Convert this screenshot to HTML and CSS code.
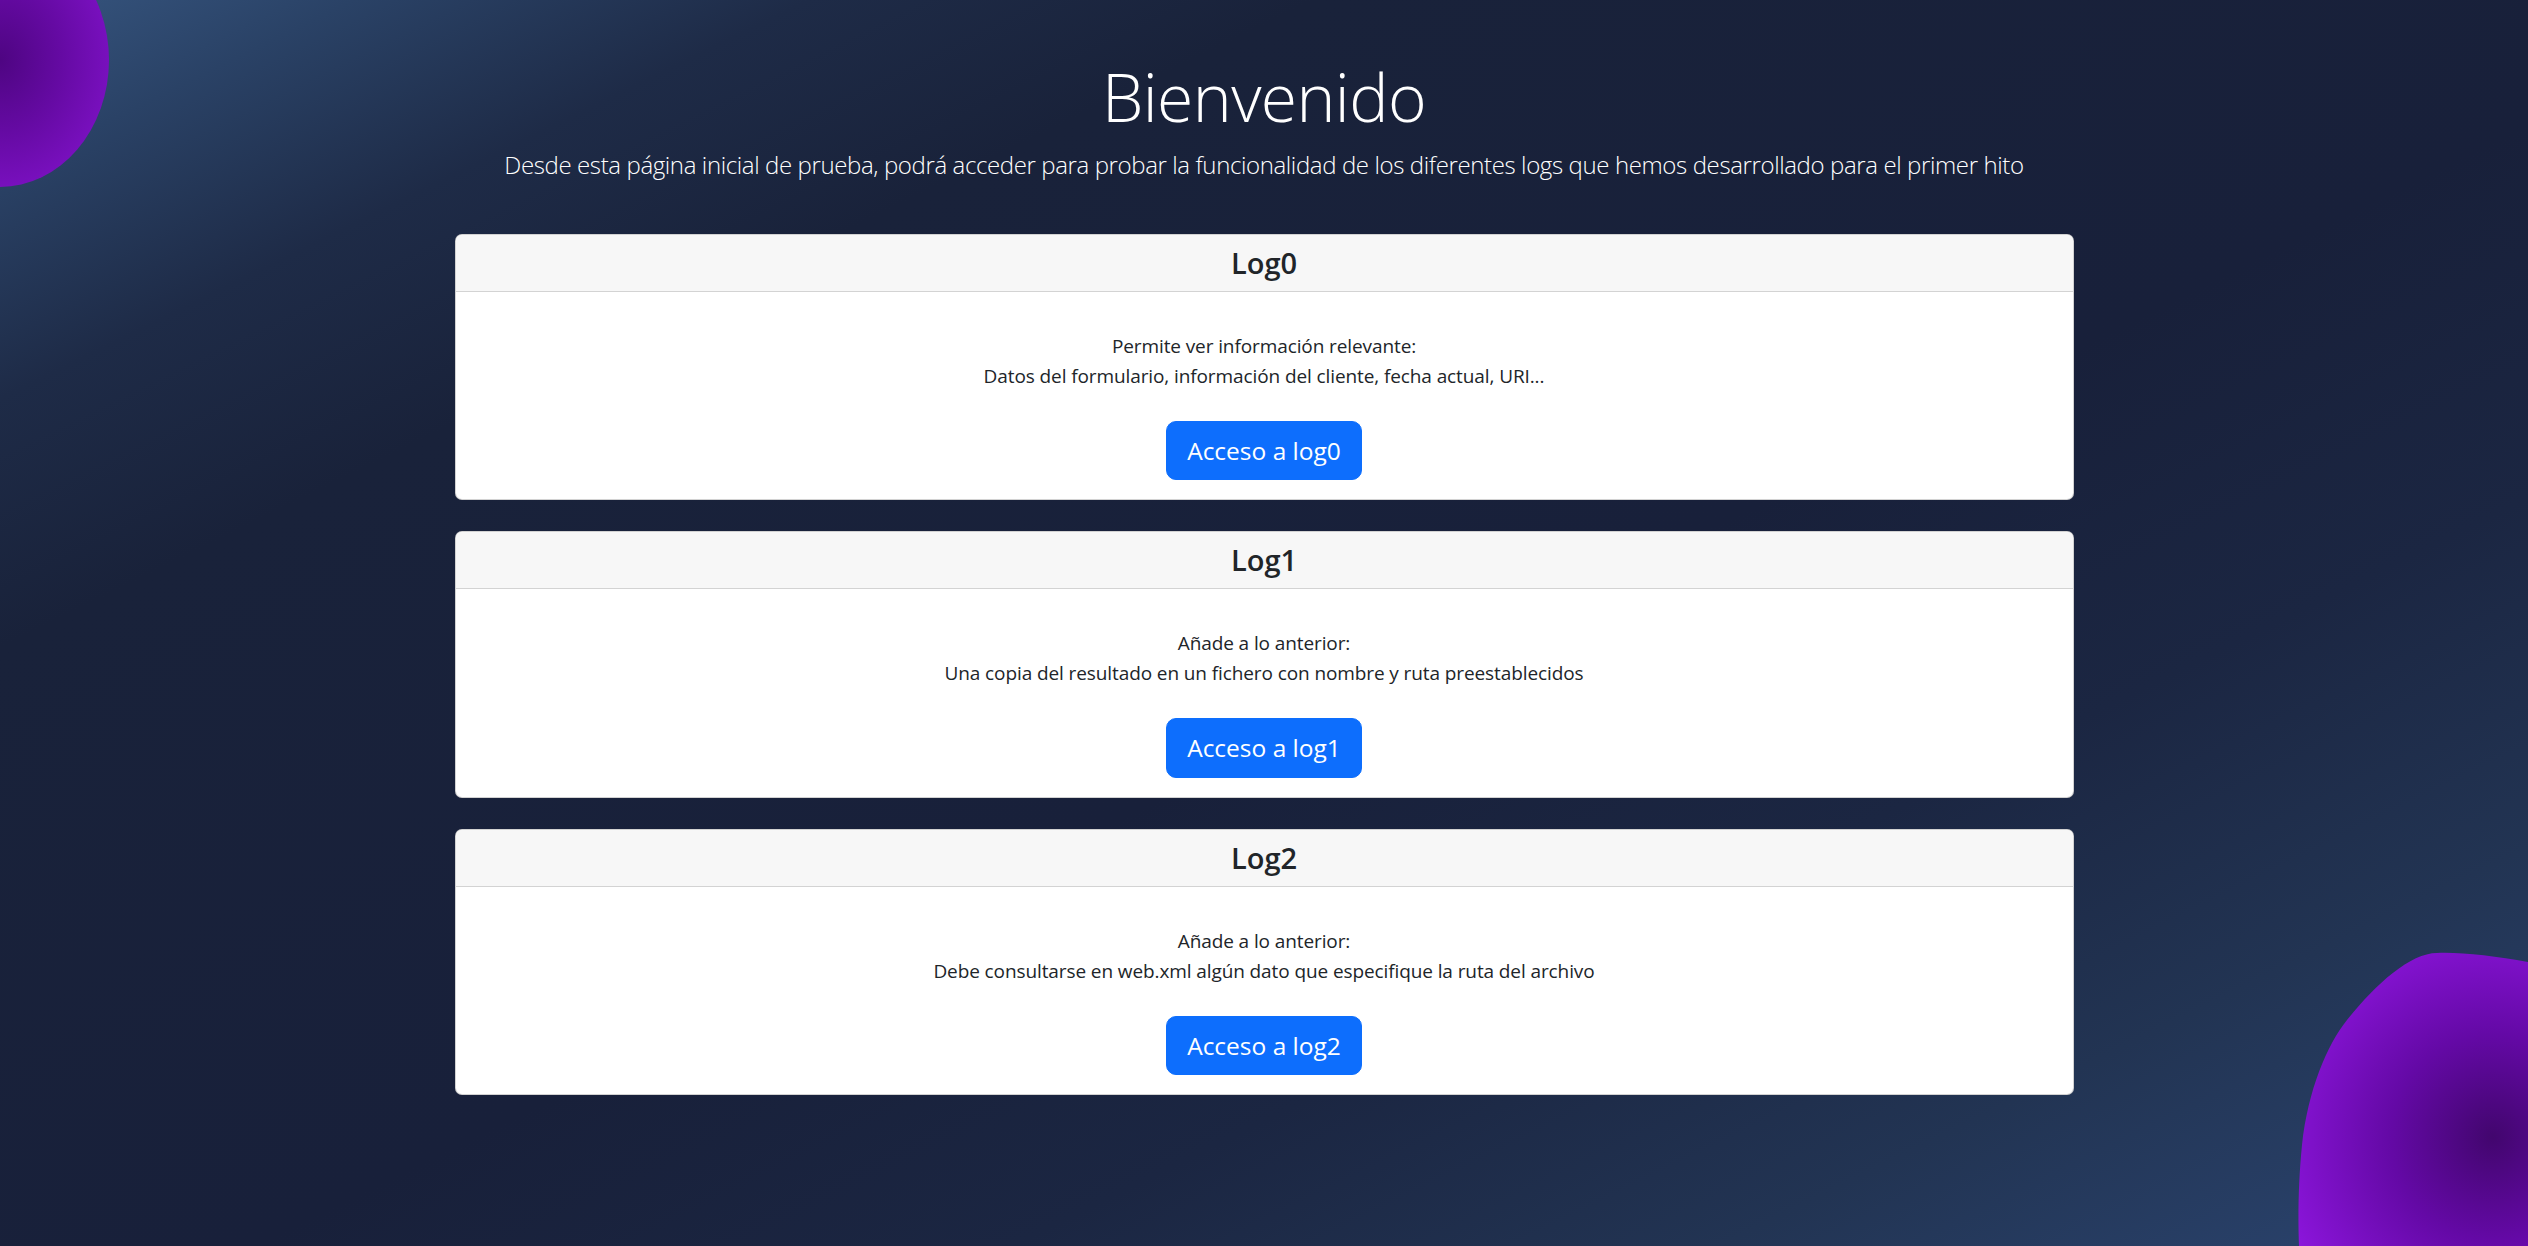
FILE: index.html
```html
<!DOCTYPE html>
<html lang="es">
<head>
<meta charset="utf-8">
<title>Bienvenido</title>
<link rel="stylesheet" href="styles.css">
</head>
<body>
<div class="blob blob-tl"></div>
<svg class="blob-br" width="248" height="316" viewBox="0 0 248 316" aria-hidden="true">
  <defs>
    <radialGradient id="brg" gradientUnits="userSpaceOnUse" cx="213" cy="207" r="230">
      <stop offset="0" stop-color="#42066e"/>
      <stop offset="0.45" stop-color="#6409a6"/>
      <stop offset="1" stop-color="#8e16de"/>
    </radialGradient>
  </defs>
  <path d="M248,32 C215,26 180,22 157,23 C130,23 95,55 67,90 C47,115 28,160 22,215 C18,255 18,290 19,316 L248,316 Z" fill="url(#brg)"/>
</svg>

<main class="page">
  <header class="intro">
    <h1 class="title">Bienvenido</h1>
    <p class="lead">Desde esta página inicial de prueba, podrá acceder para probar la funcionalidad de los diferentes logs que hemos desarrollado para el primer hito</p>
  </header>

  <section class="cards">
    <article class="card">
      <div class="card-header"><h4>Log0</h4></div>
      <div class="card-body">
        <p class="card-text">Permite ver información relevante:<br>Datos del formulario, información del cliente, fecha actual, URI...</p>
        <a class="btn" href="#">Acceso a log0</a>
      </div>
    </article>
    <article class="card">
      <div class="card-header"><h4>Log1</h4></div>
      <div class="card-body">
        <p class="card-text">Añade a lo anterior:<br>Una copia del resultado en un fichero con nombre y ruta preestablecidos</p>
        <a class="btn" href="#">Acceso a log1</a>
      </div>
    </article>
    <article class="card">
      <div class="card-header"><h4>Log2</h4></div>
      <div class="card-body">
        <p class="card-text">Añade a lo anterior:<br>Debe consultarse en web.xml algún dato que especifique la ruta del archivo</p>
        <a class="btn" href="#">Acceso a log2</a>
      </div>
    </article>
  </section>
</main>
</body>
</html>
```
FILE: styles.css
```css
* { box-sizing: border-box; }

html, body {
  margin: 0;
  padding: 0;
  height: 100%;
}

body {
  position: relative;
  min-height: 1246px;
  overflow: hidden;
  font-family: "Open Sans", "Noto Sans", "Liberation Sans", sans-serif;
  color: #212529;
  background: linear-gradient(to bottom right,
    #36557f 0%,
    #2a4266 7%,
    #1e2b47 16%,
    #19223a 26%,
    #18203a 55%,
    #1b2642 70%,
    #223453 84%,
    #2b4571 100%);
}

.blob {
  position: absolute;
  border-radius: 50%;
}

.blob-tl {
  left: -109px;
  top: -67px;
  width: 218px;
  height: 254px;
  background: radial-gradient(ellipse at 50% 50%, #4e0582 0%, #650aa3 40%, #8a15d6 100%);
}

.blob-br {
  position: absolute;
  right: 0;
  bottom: 0;
  display: block;
}

.page {
  position: relative;
  width: 1619px;
  margin: 0 auto;
  padding-top: 54px;
}

.intro {
  text-align: center;
  color: #fff;
}

.title {
  margin: 0 0 8px;
  font-size: 66px;
  font-weight: 300;
  letter-spacing: -0.6px;
  line-height: 84px;
}

.lead {
  margin: 0;
  font-size: 24px;
  font-weight: 300;
  letter-spacing: -0.38px;
  line-height: 37.5px;
  white-space: nowrap;
}

.cards {
  display: flex;
  flex-direction: column;
  gap: 31px;
  margin-top: 50px;
}

.card {
  background: #fff;
  border: 1px solid rgba(0, 0, 0, 0.175);
  border-radius: 7px;
  overflow: hidden;
}

.card-header {
  background: #f7f7f7;
  border-bottom: 1px solid #d3d3d3;
  padding: 10px 20px;
  text-align: center;
}

.card-header h4 {
  margin: 0;
  font-size: 29px;
  font-weight: 600;
  line-height: 36px;
  color: #212529;
}

.card-body {
  padding: 39px 20px 19px;
  text-align: center;
}

.card-text {
  margin: 0 0 30px;
  font-size: 19px;
  letter-spacing: -0.1px;
  line-height: 30px;
  color: #212529;
}

.btn {
  display: inline-block;
  padding: 10px 20px;
  border: 1px solid #0d6efd;
  border-radius: 10px;
  background: #0d6efd;
  color: #fff;
  font-size: 24.5px;
  line-height: 37.5px;
  text-decoration: none;
}
```
